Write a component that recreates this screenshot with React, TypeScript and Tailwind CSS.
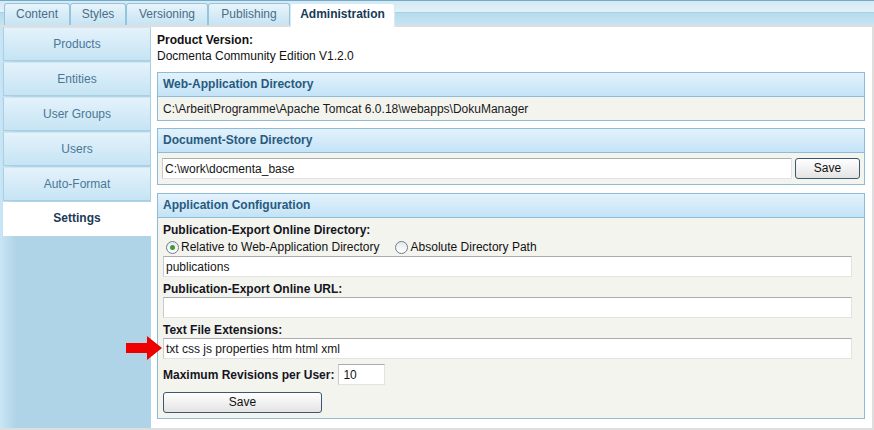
import React from "react";

const tabs = [
  { label: "Content", w: "w-[66px]" },
  { label: "Styles", w: "w-[56px]" },
  { label: "Versioning", w: "w-[82px]" },
  { label: "Publishing", w: "w-[82px]" },
];

const navItems = ["Products", "Entities", "User Groups", "Users", "Auto-Format"];

function Panel({ title, children, bodyClass }: { title: string; children: React.ReactNode; bodyClass: string }) {
  return (
    <div className="border border-[#8dbcd8] w-[708px]">
      <div className="h-[24px] leading-[22px] pl-[5px] border-b border-[#8dbcd8] bg-[linear-gradient(to_bottom,#e3f2fc,#c3e3f7)] font-bold text-[#285a80]">
        {title}
      </div>
      <div className={"bg-[#f4f4ef] " + bodyClass}>{children}</div>
    </div>
  );
}

function TextBox({ value, className }: { value: string; className: string }) {
  return (
    <input
      readOnly
      value={value}
      className={
        "h-[21px] bg-white border border-[#e2e2e2] border-t-[#a9adad] border-l-[#c9cbcb] px-[2px] text-[12px] text-[#151515] outline-none " +
        className
      }
    />
  );
}

function Button({ className }: { className: string }) {
  return (
    <button className={"h-[21px] rounded-[3px] border border-[#3b5872] bg-[linear-gradient(to_bottom,#ffffff,#e3e3e3)] text-[12px] text-[#111] leading-[19px] " + className}>
      Save
    </button>
  );
}

function Radio({ checked }: { checked?: boolean }) {
  return (
    <span className="w-[13px] h-[13px] rounded-full border border-[#6e7e8a] bg-[linear-gradient(to_bottom,#e6e9ec,#ffffff)] flex items-center justify-center shrink-0">
      {checked && <span className="w-[5px] h-[5px] rounded-full bg-[#3c9c3c]" />}
    </span>
  );
}

export default function App() {
  return (
    <div className="relative w-[874px] h-[430px] overflow-hidden bg-[#dedede] font-['Liberation_Sans',Arial,sans-serif] text-[12px] text-[#111]">
      {/* Tab strip */}
      <div className="h-[27px] flex items-start pl-[4px] pt-[3px] bg-[linear-gradient(to_bottom,#74aac5_0px,#74aac5_1px,#d5e9f4_1px,#e2f1f9_12px,#a7d2e6_12px,#a7d2e6_13px,#b6dbec_13px,#c6e4f2_25px,#dedede_25px,#dedede_27px)]">
        {tabs.map((t) => (
          <div
            key={t.label}
            className={
              "h-[22px] border border-b-0 border-[#96c4dc] rounded-t-[3px] bg-[linear-gradient(to_bottom,#e8f4fb,#c6e4f3)] text-center leading-[20px] text-[#4a6e86] " +
              t.w
            }
          >
            {t.label}
          </div>
        ))}
        <div className="w-[105px] h-[24px] border border-b-0 border-[#d6eaf5] rounded-t-[3px] bg-white text-center leading-[20px] font-bold text-[#173a58]">
          Administration
        </div>
      </div>

      {/* Main */}
      <div className="flex h-[401px]">
        <div className="w-[151px] shrink-0 pl-[3px] flex flex-col gap-[1px] bg-[linear-gradient(to_right,#c9e6f5,#b0d4e7_16px)]">
          {navItems.map((n) => (
            <div
              key={n}
              className="h-[34px] border border-[#a9cfe3] border-t-[#cfe7f4] bg-[linear-gradient(to_bottom,#e4f2fb,#c6e4f4)] text-center leading-[32px] text-[#4b7796]"
            >
              {n}
            </div>
          ))}
          <div className="h-[34px] bg-white text-center leading-[32px] font-bold text-[#1b3a57]">Settings</div>
        </div>

        <div className="flex-1 bg-white mr-[2px] pl-[6px] pt-[5px] leading-[16px]">
          <div className="font-bold">Product Version:</div>
          <div>Docmenta Community Edition V1.2.0</div>

          <div className="mt-[8px]">
            <Panel title="Web-Application Directory" bodyClass="pl-[5px] pt-[4px] pb-[3px] leading-[16px] text-[#1a1a1a]">
              C:\Arbeit\Programme\Apache Tomcat 6.0.18\webapps\DokuManager
            </Panel>
          </div>

          <div className="mt-[7px]">
            <Panel title="Document-Store Directory" bodyClass="flex items-start pl-[4px] pt-[5px] pb-[5px] gap-[3px]">
              <TextBox value="C:\work\docmenta_base" className="w-[630px]" />
              <Button className="w-[65px]" />
            </Panel>
          </div>

          <div className="mt-[8px]">
            <Panel title="Application Configuration" bodyClass="pl-[5px] pt-[4px] pb-[5px] flex flex-col items-start">
              <div className="font-bold text-[#141422]">Publication-Export Online Directory:</div>
              <div className="h-[18px] flex items-center pl-[3px]">
                <Radio checked />
                <span className="ml-[2px]">Relative to Web-Application Directory</span>
                <span className="ml-[15px]">
                  <Radio />
                </span>
                <span className="ml-[3px]">Absolute Directory Path</span>
              </div>
              <TextBox value="publications" className="w-[689px]" />
              <div className="mt-[4px] font-bold text-[#141422]">Publication-Export Online URL:</div>
              <TextBox value="" className="w-[689px]" />
              <div className="mt-[4px] font-bold text-[#141422]">Text File Extensions:</div>
              <TextBox value="txt css js properties htm html xml" className="w-[689px]" />
              <div className="mt-[5px] flex items-center">
                <span className="font-bold text-[#141422]">Maximum Revisions per User:</span>
                <TextBox value="10" className="w-[47px] ml-[4px] pl-[4px]" />
              </div>
              <Button className="w-[159px] mt-[7px]" />
            </Panel>
          </div>
        </div>
      </div>

      {/* Red arrow annotation */}
      <svg className="absolute left-[126px] top-[336px]" width="37" height="25" viewBox="0 0 37 25">
        <polygon points="0,7 21,7 21,0 36,12 21,24 21,17 0,17" fill="#ee0000" />
      </svg>
    </div>
  );
}
